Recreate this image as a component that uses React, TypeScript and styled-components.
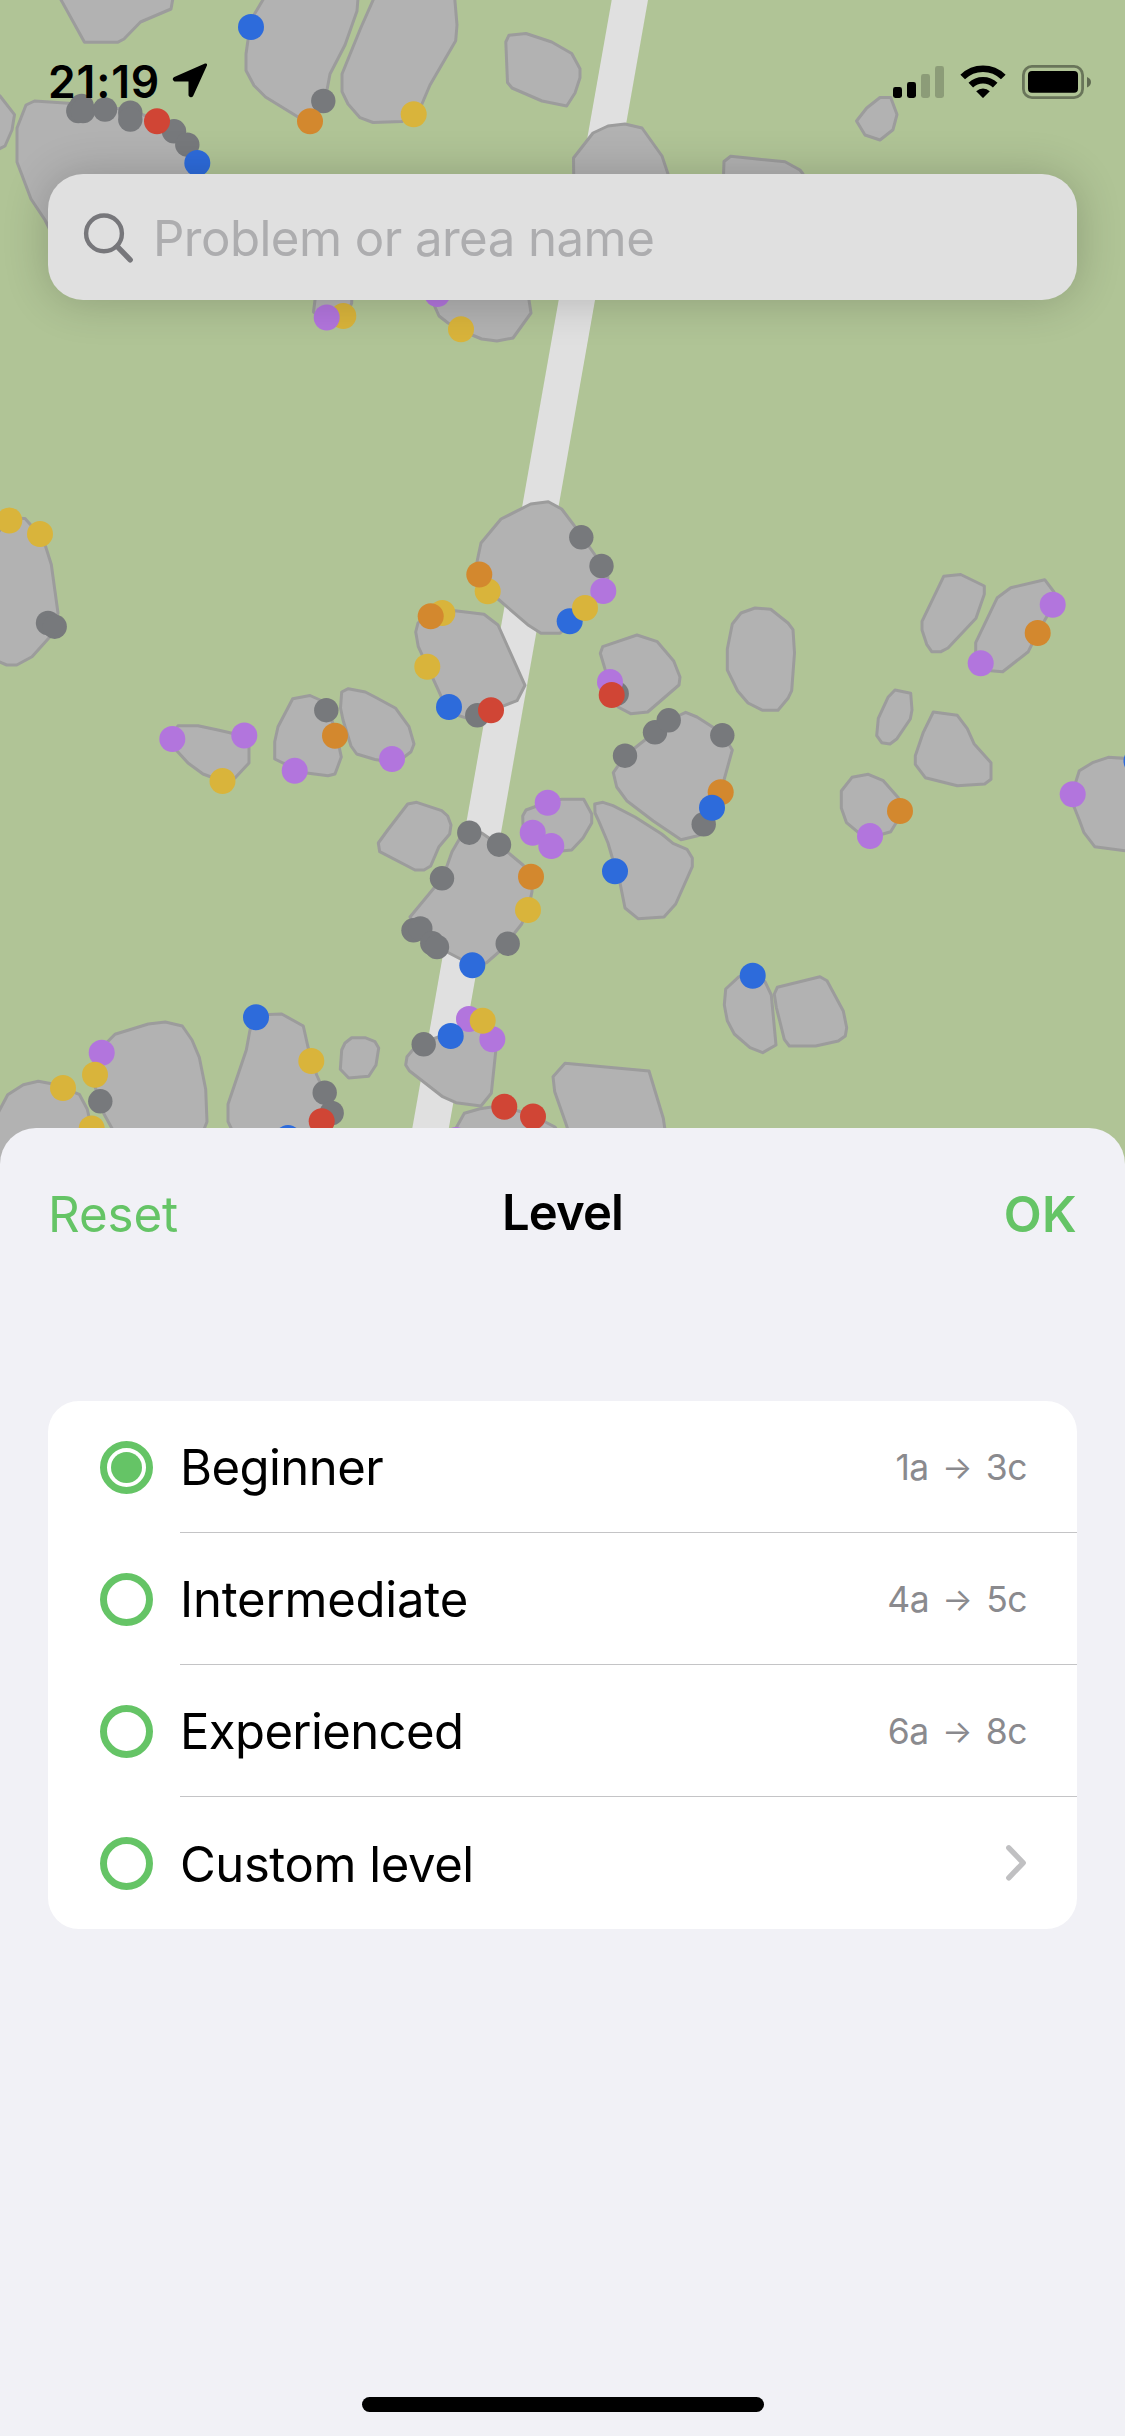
import React from "react";
import styled, { createGlobalStyle } from "styled-components";

const GlobalStyle = createGlobalStyle`
  * { box-sizing: border-box; }
  body { margin: 0; background: #f1f1f6; }
`;

const palette = {
  grey: "#77797c",
  blue: "#2d6bdb",
  red: "#d04535",
  orange: "#d3882e",
  yellow: "#d9b43b",
  purple: "#b275dd",
};
type Tone = keyof typeof palette;

const boulders: string[] = [
  "60,-2 84.5,42.3 117.5,42.3 124,39 140.5,22 171,9 173,-2",
  "-3,93 0,96 14.5,114.7 12,130 5,146 -3,150",
  "17,128 26,105 34.5,101 80,104 130,110 157,120 175,132 188,145 197,163 205,200 200,230 50,230 45,220 31,199 17,162",
  "264,-2 251,20 248,40 246,54 246,70.5 254,85.5 265.5,97 298,117 310,121 322,108 327,90 330,74 345,45 357,11 358,-2",
  "374,-2 360.5,28.5 342,74 342,91.7 348,104 360,117.7 373,122.5 402,121.5 421.5,105 430,85 455.7,40.7 457,25 454.7,-2",
  "509,35.2 526,33.5 551.7,42 571.7,53.5 580,68.7 580,77.7 575,93 566.7,106 542,101 512,88 507.5,82.5 505.8,42",
  "574,200 573.5,158 593,133 608,126 625,124 642,128 662,156 668,174 668,200",
  "723,190 724,161.5 730.7,156.3 750,158.3 785,161.7 800,170 803,174 803,190",
  "430,280 431,298 439,316 448,323 472,335 481.7,339 497,341 513,338 531,313 529,300 529,280",
  "315,290 315,300 313.5,312 325,320 345,320 351.7,303 352,290",
  "880,97.5 890.7,97.5 897,114.5 893,129.7 880,140 865,135 856.5,121 866.7,108",
  "-3,534 9,518 25,518.5 31.7,526 45.7,546.7 51.3,564.5 58,613 50,636.7 32,656.7 16.7,665 6.7,665 -3,661",
  "178,725.7 198,725.7 218,730 244,736 249,745 249,763 235,778 222,781 203,774 188,763 177,751 170,738",
  "292.7,698.7 310,695.5 326.7,703 337,737 341.3,757 335,774 328,775.7 306.7,773 283,763 274.7,759 274.7,741.7 278,726.7",
  "341.7,692 348.3,688.7 365.3,692 375,697 395.7,708.3 409,726.7 414,744 411,751.7 403,758 391,762 375,759.5 356.7,754 351,746 343,720 340.5,708",
  "530.7,504 548.3,501.7 561.7,509 575,526.7 595,555 608,577 605,592 585,608 560,633.3 541,633.3 527.7,624.7 498,599 479,575 477,561.7 481,543 501,519",
  "430,612 455,610.7 484,614.3 498,625 525,685.3 517,700.7 491,710.7 477,715.7 465,717.7 448,712 439,691.7 418.3,646.7 415.7,632 418,623",
  "602.7,646.7 637,635 657.3,641.7 673.7,661 680,677 679,685 647.7,712 630.7,713.7 618,707 605,669 600.3,653.3",
  "741,613 755,608 770.7,609.3 788,623 793,629.7 794.5,653 791.7,690.7 788,698.3 778,710.3 762.7,710.3 748,703 737.7,691 727.3,670 727.3,649 732.3,624",
  "685.7,712.3 697,717 722,733 732.3,750 724,780 721,792 712,808 703,834 696.7,836 681,839.7 653.3,821 626.7,800.7 616.7,787 613.3,772.7 625,755.7 655,732 668,720.7 680,715",
  "526,810 548,802 561.7,799.3 583.7,799.3 591.7,814 591.7,823 583,838 571.7,850 551,852 533,833 523,825 522.7,816",
  "594.7,804 603,802.3 613,805.7 635,817 661.7,834 673,843.3 687,849.3 692.3,858 692.3,866.7 675.7,904 664,917 638,918.7 625,908 620,883 612,856.7 608,843 599,821.7 595,813",
  "407.7,804 416.7,802.3 441.7,810.7 447.7,816 451,825 449.7,834 439,846.7 430.7,866 424,870 415,870 379.7,851.7 378.3,843 387.7,830",
  "460,838 481.7,833 499,845 523,865 532,876.7 532,891.7 528,910 521.7,924 513,935 508,944 486.7,962.7 472,965 449,953 435,945 418,930 410,917 434,888 446.7,866.7 452,851.7",
  "412.7,1050 423.7,1042 450.7,1033 475,1023 492,1033 495.7,1051.7 491.3,1093.3 481,1106 456,1102.7 442,1096.3 409.3,1070.7 405.7,1065 407,1056.7",
  "455,1130 464.3,1113.3 480,1108.7 491.7,1107 504,1106.7 531.7,1115 555,1127 560,1135",
  "565,1063.3 649,1071 663.3,1118.3 665,1130 568,1130 565.7,1123 554.7,1091.7 553,1076.7",
  "725.7,989 739,976.7 752,975 765,981.7 771.3,995 776,1045 762.7,1052.7 750,1047.7 734.3,1034 727.3,1020.7 724.3,1005",
  "777.3,987.3 820,976.7 827,980.7 843.3,1011 846.7,1027.7 845.3,1036 838.3,1041 815.7,1046 789.3,1046 784.3,1039.3 776.3,1007.3 774.3,994",
  "943.7,576.3 960.7,574.5 984.3,586 984.3,594.3 976,618.3 948,648 941,651.7 931.7,651.7 926.7,644.3 922,630 922,621.3",
  "997.3,597.7 1010.7,587.7 1044.7,579.7 1054,592 1050,611 1038,632 1028.3,651.7 1002.7,671.7 990.7,670.7 980,662 975.7,653 975.7,642.7",
  "895,690 910.7,693.3 912,710 910.3,719 897,738.7 890,744 881.7,742.7 876.7,735.7 878.3,718.3 888,697.3",
  "933.3,712 957.3,715.3 967.3,728.7 974,743.7 991,762.7 991,779.3 984.7,784 957.3,785.7 925.3,777.7 915.3,764.3 915.3,755.7 923.3,732.3",
  "852,777.3 868.3,774.3 883.3,780.7 898.3,797.7 902,815 896,823 890.7,831.7 883,834 870,835 857.3,831.7 846.5,822.7 841.3,808 841.3,791",
  "1079.3,770.7 1093.3,762.3 1108.3,757.3 1130,758.7 1130,851.5 1094.7,846.7 1084,832.7 1079.3,820 1074,806.7 1072,794",
  "-3,1115 7.7,1094.7 23.3,1084.7 38.3,1081.3 53,1084 79.3,1094.3 87.3,1109.3 89,1117 92,1180 -3,1180",
  "115,1034.3 148.3,1024 165.3,1022 182.3,1026 192,1040 199.3,1057.3 205.7,1089.3 207,1121.7 203,1132 114,1132 104,1114 95,1086.7 100,1053 107.3,1042",
  "256,1015 281.7,1014 303.3,1026 308.3,1048.3 316.7,1075 328,1100 320,1123 317,1132 233,1132 228,1121.7 228,1104.3 246.3,1050 250,1030",
  "351.7,1037.7 365,1037.7 375,1041.7 378.7,1048 376,1065 368.7,1076.3 348.7,1078 340.3,1069.3 341.7,1050 345,1043",
];

const problems: [Tone, number, number][] = [
  ["blue", 251, 27], ["grey", 323.3, 101], ["orange", 310, 121.3],
  ["grey", 81.7, 106], ["grey", 78.3, 111], ["grey", 83, 111], ["grey", 105, 109.5],
  ["grey", 130.3, 112.7], ["grey", 130.3, 119.5], ["grey", 174, 131.3], ["grey", 187.3, 144.7],
  ["red", 157, 121.3], ["blue", 197.3, 163], ["yellow", 343.3, 316], ["purple", 326.7, 317.5],
  ["yellow", 413.7, 114.3], ["purple", 437.3, 294], ["yellow", 461, 329.3],
  ["yellow", 9.3, 520.5], ["yellow", 40, 534], ["grey", 48, 623], ["grey", 54.7, 626.7],
  ["purple", 172.3, 739], ["purple", 244.3, 735.5], ["yellow", 222.5, 781],
  ["grey", 326.3, 710.2], ["orange", 335, 735.7], ["purple", 294.7, 770.7], ["purple", 392, 759],
  ["grey", 581.3, 537.3], ["grey", 601.5, 566], ["yellow", 487.7, 591.3], ["orange", 479.3, 574.5],
  ["purple", 603.3, 591], ["blue", 569.7, 621.3], ["yellow", 585, 608],
  ["yellow", 442.3, 613], ["orange", 430.7, 616.3], ["yellow", 427.3, 666.7], ["blue", 449, 707],
  ["grey", 477.3, 715.3], ["red", 491, 710.3], ["grey", 616.7, 693.7], ["purple", 610, 682],
  ["red", 611.7, 695], ["grey", 625, 755.7], ["grey", 655, 732.3], ["grey", 668.7, 720.3],
  ["grey", 722.3, 735.3], ["orange", 720.7, 792.3], ["grey", 703.7, 824.3], ["blue", 712, 807.8],
  ["purple", 547.7, 802.7], ["purple", 532.7, 832.7], ["purple", 551.3, 846],
  ["grey", 469.3, 832.7], ["grey", 499, 844.7], ["grey", 442, 878.3], ["orange", 531, 876.7],
  ["yellow", 528, 910], ["grey", 507.7, 943.7], ["grey", 413.5, 930.3], ["grey", 420.3, 928.5],
  ["grey", 432.3, 943.3], ["grey", 437, 947], ["blue", 472.3, 965.3], ["blue", 615, 871.3],
  ["purple", 469, 1019], ["purple", 492.3, 1039.3], ["yellow", 482.7, 1020.7],
  ["blue", 450.7, 1036], ["grey", 423.7, 1044.3], ["red", 504.3, 1106.7], ["red", 533, 1116.5],
  ["purple", 456, 1140], ["blue", 752.7, 975.7],
  ["purple", 1052.7, 604.7], ["orange", 1037.7, 633], ["purple", 980.7, 663.3],
  ["orange", 900, 811], ["purple", 870, 836], ["purple", 1072.7, 794.3], ["blue", 1136.5, 761],
  ["purple", 101.7, 1052.7], ["yellow", 95, 1074.7], ["grey", 100.3, 1101.3],
  ["yellow", 63, 1088], ["yellow", 91.7, 1128.5], ["blue", 256, 1017.3], ["yellow", 311.3, 1061],
  ["grey", 324.7, 1092.7], ["grey", 331.7, 1113], ["red", 321.7, 1121.3], ["blue", 288, 1138],
];

const Screen = styled.main`
  position: relative;
  width: 1125px;
  height: 2436px;
  display: flex;
  flex-direction: column;
  overflow: hidden;
  background: #b0c496;
  font-family: Inter, "Liberation Sans", sans-serif;
  color: #000;
`;

const MapLayer = styled.svg`
  position: absolute;
  inset: 0 0 auto 0;
  display: block;
`;

const Overlay = styled.div`
  position: relative;
  height: 1128px;
  padding: 0 48px;
`;

const StatusBar = styled.header`
  display: flex;
  align-items: flex-end;
  height: 104px;
  margin: 0 -15px 0 0;
  padding-bottom: 5px;
`;

const Clock = styled.span`
  width: 124px;
  font-size: 44.5px;
  line-height: 34px;
  font-weight: 560;
  letter-spacing: 0.8px;
  white-space: nowrap;
`;

const StatusIcons = styled.div`
  display: flex;
  align-items: flex-end;
  margin-left: auto;
`;

const SearchField = styled.div`
  display: flex;
  align-items: center;
  height: 126px;
  margin-top: 70px;
  padding-left: 34px;
  gap: 18px;
  border-radius: 35px;
  background: #e0e0e0;
  box-shadow: 0 1px 46px rgba(0, 0, 0, 0.2);
`;

const Placeholder = styled.span`
  font-size: 49.2px;
  line-height: 60px;
  letter-spacing: -0.56px;
  color: #adadaf;
  margin-top: 2px;
  white-space: nowrap;
`;

const Sheet = styled.section`
  position: relative;
  flex: 1;
  display: flex;
  flex-direction: column;
  align-items: center;
  padding: 0 48px 24px;
  border-radius: 36px 36px 0 0;
  background: #f1f1f6;
`;

const SheetHeader = styled.div`
  align-self: stretch;
  display: grid;
  grid-template-columns: 1fr auto 1fr;
  align-items: center;
  height: 169px;
  margin-bottom: 104px;
`;

const HeaderAction = styled.button<{ $primary?: boolean }>`
  justify-self: ${(p) => (p.$primary ? "end" : "start")};
  padding: 2px 0 0;
  border: 0;
  background: none;
  font-family: inherit;
  font-size: 49.3px;
  line-height: 60px;
  font-weight: ${(p) => (p.$primary ? 600 : 400)};
  letter-spacing: ${(p) => (p.$primary ? 0.3 : -0.1)}px;
  color: #65c466;
`;

const Title = styled.h1`
  margin: 0;
  font-size: 49px;
  line-height: 60px;
  font-weight: 600;
  letter-spacing: -0.9px;
`;

const Options = styled.ul`
  align-self: stretch;
  margin: 0;
  padding: 0;
  list-style: none;
  border-radius: 31px;
  background: #fff;
`;

const Option = styled.li`
  display: flex;
  height: 132px;
  padding-left: 52px;
  align-items: center;
`;

const Radio = styled.span<{ $checked?: boolean }>`
  flex: none;
  display: grid;
  place-items: center;
  width: 53px;
  height: 53px;
  margin-right: 27px;
  border: 7px solid #65c466;
  border-radius: 50%;

  &::after {
    content: "";
    width: 31px;
    height: 31px;
    border-radius: 50%;
    background: ${(p) => (p.$checked ? "#65c466" : "transparent")};
  }
`;

const OptionBody = styled.div<{ $last?: boolean }>`
  flex: 1;
  display: flex;
  align-items: center;
  justify-content: space-between;
  height: 132px;
  padding-right: 50px;
  border-bottom: ${(p) => (p.$last ? "0" : "1px solid #c4c4c6")};
`;

const OptionName = styled.span<{ $tracking: number }>`
  padding-top: 3px;
  font-size: 49px;
  line-height: 60px;
  letter-spacing: ${(p) => p.$tracking}px;
  white-space: nowrap;
`;

const Grades = styled.span`
  display: flex;
  align-items: center;
  padding-top: 2px;
  font-size: 35.5px;
  line-height: 44px;
  letter-spacing: -0.5px;
  color: #8a8a8e;
`;

const Arrow = styled.span`
  width: 31px;
  margin: 0 13px 0 13px;
  font-size: 32px;
  letter-spacing: 0;
  display: flex;
  justify-content: center;
`;

const HomeIndicator = styled.div`
  width: 402px;
  height: 15px;
  margin-top: auto;
  border-radius: 8px;
  background: #000;
`;

const levels = [
  { name: "Beginner", tracking: -0.55, from: "1a", to: "3c", checked: true },
  { name: "Intermediate", tracking: -0.2, from: "4a", to: "5c" },
  { name: "Experienced", tracking: -0.6, from: "6a", to: "8c" },
  { name: "Custom level", tracking: -0.42 },
];

const BoulderMap = () => (
  <MapLayer width="1125" height="1180" viewBox="0 0 1125 1180">
    <polygon points="611.7,0 648,0 448.5,1130 412,1130" fill="#e0e0e0" />
    <g fill="#b2b2b2" stroke="#9c9c9c" strokeWidth="3" strokeLinejoin="round">
      {boulders.map((points) => (
        <polygon key={points} points={points} />
      ))}
    </g>
    {problems.map(([tone, x, y]) => (
      <circle key={`${x}-${y}`} cx={x} cy={y} r={tone === "grey" ? 12.2 : 13} fill={palette[tone]} />
    ))}
  </MapLayer>
);

const LocationIcon = () => (
  <svg width="36" height="36" viewBox="0 0 36 36">
    <path
      d="M33.6 1.9 2.9 15.3 Q1.5 16 3 17 H17.2 Q18 17 18 17.8 V32 Q19 33.6 20 32 Z"
      stroke="#000"
      strokeWidth="3"
      strokeLinejoin="round"
    />
  </svg>
);

const SignalIcon = () => (
  <svg width="51" height="34" viewBox="0 0 51 34">
    <rect x="0" y="22" width="9" height="11" rx="2.4" />
    <rect x="14" y="17" width="9" height="16" rx="2.4" />
    <rect x="28" y="9" width="9" height="24" rx="2.4" opacity="0.2" />
    <rect x="42" y="1" width="9" height="32" rx="2.4" opacity="0.2" />
  </svg>
);

const WifiIcon = () => (
  <svg width="78" height="34" viewBox="-16 0 78 34">
    <g fill="none" stroke="#000" strokeWidth="6.6">
      <path d="M2.7 12 A29 29 0 0 1 43.3 12" />
      <path d="M10.8 20.2 A17.6 17.6 0 0 1 35.2 20.2" />
    </g>
    <path d="M16.2 26.2 A10 10 0 0 1 29.8 26.2 L23.6 32.6 Q23 33.2 22.4 32.6 Z" />
  </svg>
);

const BatteryIcon = () => (
  <svg width="70" height="34" viewBox="0 0 70 34">
    <rect x="1.4" y="1.4" width="59.2" height="31.2" rx="8.5" fill="none" stroke="#000" strokeWidth="2.8" opacity="0.4" />
    <rect x="6" y="6" width="50" height="21.8" rx="4" />
    <path d="M65 12 Q69 13.5 69 17 T65 22.5 Z" opacity="0.45" />
  </svg>
);

const SearchIcon = () => (
  <svg width="53" height="53" viewBox="0 0 53 53" fill="none" stroke="#77777b" strokeLinecap="round">
    <circle cx="22" cy="22.4" r="17.9" strokeWidth="4.4" />
    <path d="M35.6 35.8 L48.2 48.8" strokeWidth="5.4" />
  </svg>
);

const Chevron = () => (
  <svg width="22" height="38" viewBox="0 0 22 38" fill="none" stroke="#c0c0c2" strokeWidth="5.4" strokeLinecap="round" strokeLinejoin="round">
    <path d="M3.8 3.8 L18.2 18.8 L3.8 33.8" />
  </svg>
);

export default function App() {
  return (
    <Screen>
      <GlobalStyle />
      <BoulderMap />
      <Overlay>
        <StatusBar>
          <Clock>21:19</Clock>
          <LocationIcon />
          <StatusIcons>
            <SignalIcon />
            <WifiIcon />
            <BatteryIcon />
          </StatusIcons>
        </StatusBar>
        <SearchField>
          <SearchIcon />
          <Placeholder>Problem or area name</Placeholder>
        </SearchField>
      </Overlay>
      <Sheet>
        <SheetHeader>
          <HeaderAction>Reset</HeaderAction>
          <Title>Level</Title>
          <HeaderAction $primary>OK</HeaderAction>
        </SheetHeader>
        <Options>
          {levels.map((level, i) => (
            <Option key={level.name}>
              <Radio $checked={level.checked} />
              <OptionBody $last={i === levels.length - 1}>
                <OptionName $tracking={level.tracking}>{level.name}</OptionName>
                {level.from ? (
                  <Grades>
                    {level.from}
                    <Arrow>→</Arrow>
                    {level.to}
                  </Grades>
                ) : (
                  <Chevron />
                )}
              </OptionBody>
            </Option>
          ))}
        </Options>
        <HomeIndicator />
      </Sheet>
    </Screen>
  );
}
